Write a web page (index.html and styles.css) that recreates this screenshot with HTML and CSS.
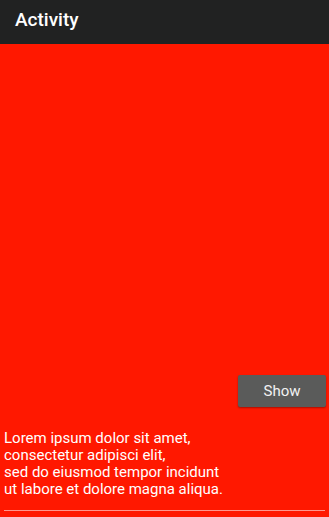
FILE: index.html
```html
<!DOCTYPE html>
<html>
<head>
<meta charset="utf-8">
<link rel="stylesheet" href="styles.css">
</head>
<body>
<div class="app">
  <header class="bar"><span class="title">Activity</span></header>
  <main class="content">
    <div class="spacer"></div>
    <div class="btn-row"><button class="btn">Show</button></div>
    <p class="lorem">Lorem ipsum dolor sit amet,<br>consectetur adipisci elit,<br>sed do eiusmod tempor incidunt<br>ut labore et dolore magna aliqua.</p>
    <div class="rule"></div>
  </main>
</div>
</body>
</html>
```
FILE: styles.css
```css
html, body {
  margin: 0;
  padding: 0;
  height: 100%;
}
body {
  font-family: Roboto, "Liberation Sans", sans-serif;
  background: #ff1800;
}
.app {
  display: flex;
  flex-direction: column;
  height: 517px;
}
.bar {
  height: 44px;
  background: #212222;
  display: flex;
  align-items: center;
  padding-left: 15px;
  flex-shrink: 0;
}
.title {
  color: #fff;
  font-size: 19px;
  font-weight: 500;
  margin-top: -6px;
}
.content {
  flex: 1;
  display: flex;
  flex-direction: column;
  background: #ff1800;
}
.spacer {
  flex: 1;
}
.btn-row {
  display: flex;
  justify-content: flex-end;
  padding-right: 3px;
}
.btn {
  width: 88px;
  height: 32px;
  background: #5a5b5a;
  color: #f2f2f2;
  border: none;
  border-radius: 2px;
  font-family: Roboto, "Liberation Sans", sans-serif;
  font-size: 15px;
  box-shadow: 0 1px 2px rgba(0,0,0,0.35);
  padding: 0;
}
.lorem {
  margin: 23px 0 0 0;
  padding-left: 4px;
  color: #fff;
  font-size: 15px;
  line-height: 17px;
}
.rule {
  margin: 12px 4px 6px 4px;
  height: 1px;
  background: rgba(255,255,255,0.55);
}
```
